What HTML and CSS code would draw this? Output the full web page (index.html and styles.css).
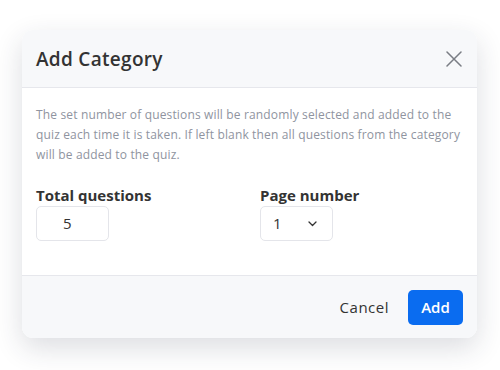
FILE: index.html
```html
<!DOCTYPE html>
<html>
<head>
<meta charset="utf-8">
<link rel="stylesheet" href="styles.css">
</head>
<body>
<div class="dialog">
  <div class="dialog-header">
    <h2 class="dialog-title">Add Category</h2>
    <button class="close-btn" aria-label="Close">
      <svg width="16" height="16" viewBox="0 0 16 16"><path d="M1 1L15 15M15 1L1 15" stroke="#7a7d84" stroke-width="1.5" stroke-linecap="round" fill="none"/></svg>
    </button>
  </div>
  <div class="dialog-body">
    <p class="help">The set number of questions will be randomly selected and added to the quiz each time it is taken. If left blank then all questions from the category will be added to the quiz.</p>
    <div class="fields">
      <div class="field">
        <label class="label">Total questions</label>
        <div class="input">5</div>
      </div>
      <div class="field">
        <label class="label">Page number</label>
        <div class="input select">
          <span>1</span>
          <svg width="9" height="6" viewBox="0 0 9 6"><path d="M1 1L4.5 4.5L8 1" stroke="#333" stroke-width="1.3" fill="none" stroke-linecap="round" stroke-linejoin="round"/></svg>
        </div>
      </div>
    </div>
  </div>
  <div class="dialog-footer">
    <button class="btn-cancel">Cancel</button>
    <button class="btn-add">Add</button>
  </div>
</div>
</body>
</html>
```
FILE: styles.css
```css
* { box-sizing: border-box; }
html, body { height: 100%; }
body {
  margin: 0;
  background: #ffffff;
  font-family: "Open Sans", "DejaVu Sans", sans-serif;
  color: #333;
  padding-top: 30px;
}
.dialog {
  width: 455px;
  margin: 0 0 0 22px;
  border-radius: 11px;
  background: #fff;
  box-shadow: 0 10px 28px rgba(40, 45, 70, 0.16);
  overflow: hidden;
}
.dialog-header {
  height: 58px;
  background: #f7f8fa;
  border-bottom: 1px solid #e6e7ec;
  display: flex;
  align-items: center;
  justify-content: space-between;
  padding: 0 14px 0 14px;
}
.dialog-title {
  margin: 0;
  font-size: 19px;
  font-weight: 600;
  color: #333;
  letter-spacing: 0.3px;
}
.close-btn {
  border: 0;
  background: none;
  padding: 0;
  width: 16px;
  height: 16px;
  display: flex;
  margin-right: 1px;
}
.dialog-body {
  height: 188px;
  padding: 17px 14px 0 14px;
  border-bottom: 1px solid #e6e7ec;
}
.help {
  margin: 0;
  font-size: 12px;
  letter-spacing: 0.15px;
  line-height: 20px;
  color: #8f94a0;
}
.fields {
  display: grid;
  grid-template-columns: 224px 1fr;
  margin-top: 20px;
}
.label {
  display: block;
  font-size: 15px;
  font-weight: 700;
  color: #333;
  line-height: 20px;
}
.input {
  margin-top: 1px;
  width: 73px;
  height: 35px;
  border: 1px solid #e4e5ea;
  border-radius: 5px;
  font-size: 15px;
  line-height: 33px;
  padding-left: 26px;
  color: #333;
}
.select {
  display: flex;
  align-items: center;
  justify-content: space-between;
  padding: 0 15px 0 12px;
}
.dialog-footer {
  height: 62px;
  background: #f7f8fa;
  display: flex;
  align-items: center;
  justify-content: flex-end;
  padding: 0 14px;
  gap: 19px;
}
.btn-cancel {
  border: 0;
  background: none;
  font-family: inherit;
  font-size: 15px;
  letter-spacing: 0.5px;
  color: #333;
  padding: 0;
}
.btn-add {
  border: 0;
  background: #0a6cf0;
  color: #fff;
  font-family: inherit;
  font-size: 15px;
  font-weight: 600;
  width: 55px;
  height: 35px;
  border-radius: 5px;
}
```
